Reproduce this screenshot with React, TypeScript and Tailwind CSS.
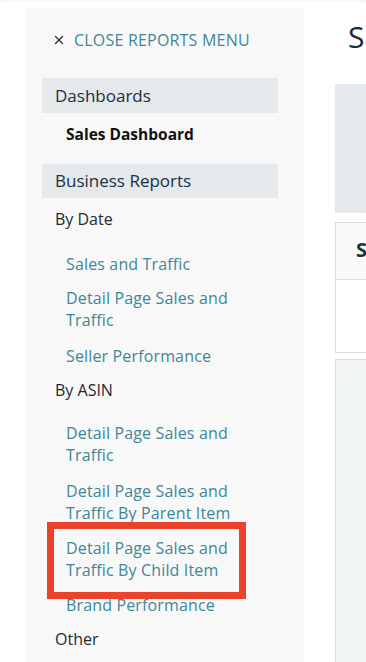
import { X } from 'lucide-react'

type Item = { label: string[]; mt: string; marked?: boolean }

const byDate: Item[] = [
  { label: ['Sales and Traffic'], mt: 'mt-[23px]' },
  { label: ['Detail Page Sales and', 'Traffic'], mt: 'mt-[12px]' },
  { label: ['Seller Performance'], mt: 'mt-[14px]' }
]

const byAsin: Item[] = [
  { label: ['Detail Page Sales and', 'Traffic'], mt: 'mt-[21px]' },
  { label: ['Detail Page Sales and', 'Traffic By Parent Item'], mt: 'mt-[14px]' },
  { label: ['Detail Page Sales and', 'Traffic By Child Item'], mt: 'mt-[13px]', marked: true },
  { label: ['Brand Performance'], mt: 'mt-[13px]' }
]

function ReportLink ({ item }: { item: Item }) {
  return (
    <li className={`relative pl-[24px] ${item.mt}`}>
      {item.marked && (
        <span className="absolute left-[5px] top-[-15px] h-[77px] w-[199px] border-[7px] border-[#e9432b]" />
      )}
      <a className="block text-[16px] leading-[22px] tracking-[0.15px] text-[#3d8799]">
        {item.label.map((l) => (
          <span key={l} className="block">{l}</span>
        ))}
      </a>
    </li>
  )
}

function Sidebar () {
  return (
    <aside className="ml-[25px] mt-[8px] w-[279px] shrink-0 bg-[#f8f8f8] pl-[17px] pr-[26px] pt-[21px] pb-[40px]">
      <button className="ml-[10px] flex items-center gap-[8px] text-[16px] leading-[22px] tracking-[0.2px] text-[#3d8799]">
        <X size={14} strokeWidth={2.4} className="text-[#2b3a44]" />
        <span>CLOSE REPORTS MENU</span>
      </button>

      <div className="mt-[27px] flex h-[35px] items-center bg-[#e4e9ec] pl-[13px] text-[17px] text-[#232f3e]">
        Dashboards
      </div>
      <p className="mt-[10px] pl-[24px] text-[15.5px] font-bold leading-[22px] text-[#111]">Sales Dashboard</p>

      <div className="mt-[19px] flex h-[34px] items-center bg-[#e4e9ec] pl-[13px] text-[17px] text-[#232f3e]">
        Business Reports
      </div>

      <p className="mt-[10px] pl-[13px] text-[16px] leading-[22px] text-[#1e2a32]">By Date</p>
      <ul>
        {byDate.map((it, i) => <ReportLink key={i} item={it} />)}
      </ul>

      <p className="mt-[12px] pl-[13px] text-[16px] leading-[22px] text-[#1e2a32]">By ASIN</p>
      <ul>
        {byAsin.map((it, i) => <ReportLink key={i} item={it} />)}
      </ul>

      <p className="mt-[12px] pl-[13px] text-[16px] leading-[22px] text-[#1e2a32]">Other</p>
    </aside>
  )
}

function Content () {
  return (
    <main className="ml-[31px] min-w-[600px] pt-[19px]">
      <h1 className="ml-[13px] text-[30px] leading-[36px] text-[#1e2a32]">Sales Dashboard</h1>
      <div className="mt-[29px] h-[129px] bg-[#e4e9ec]" />
      <section className="mt-[9px] h-[131px] border border-[#dcdcdc] bg-white">
        <div className="h-[57px] border-b border-[#dcdcdc] bg-[#fafafa] pl-[20px] pt-[13px] text-[20px] font-bold leading-[28px] text-[#1b3440]">
          Sales Snapshot
        </div>
      </section>
      <div className="mt-[6px] h-[400px] border border-[#dcdcdc] bg-[#f3f6f7]" />
    </main>
  )
}

export default function App () {
  return (
    <div
      className="flex h-[662px] w-[366px] overflow-hidden bg-white shadow-[inset_0_3px_4px_-2px_rgba(0,0,0,0.06)]"
      style={{ fontFamily: '"Open Sans", "Liberation Sans", sans-serif' }}
    >
      <Sidebar />
      <Content />
    </div>
  )
}
